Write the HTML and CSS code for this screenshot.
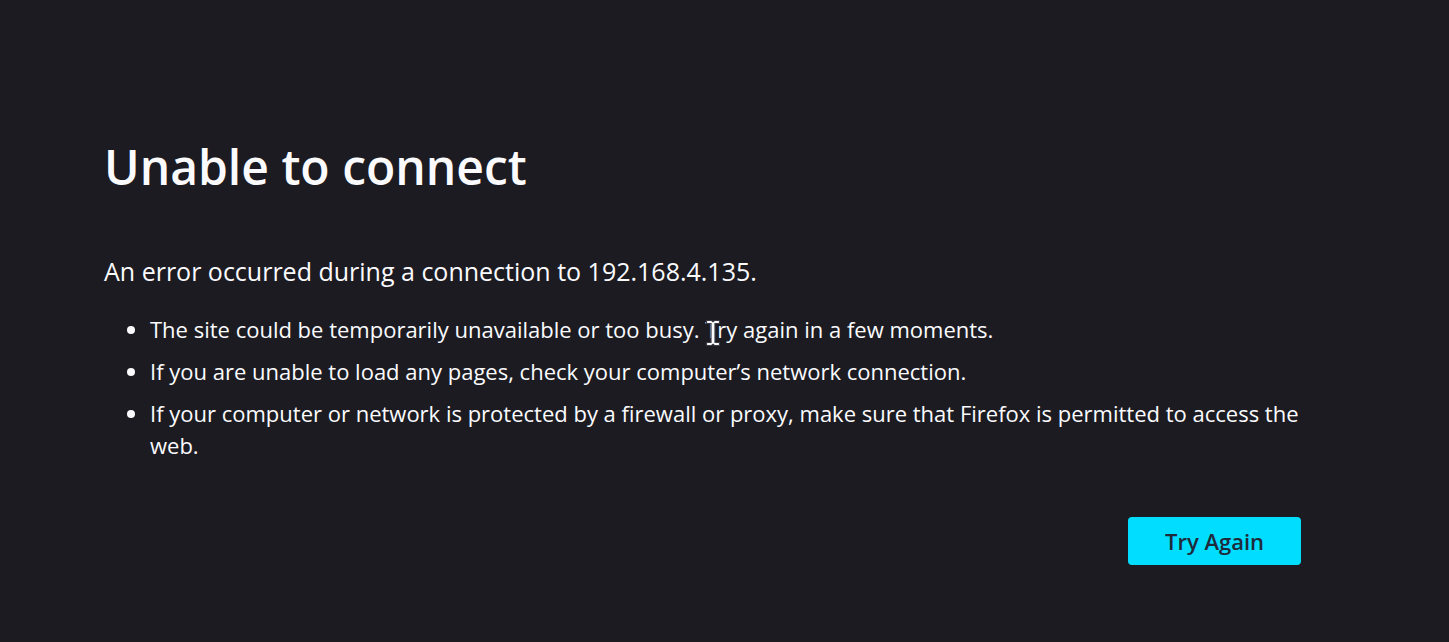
FILE: index.html
```html
<!DOCTYPE html>
<html lang="en">
<head>
<meta charset="utf-8">
<title>Problem loading page</title>
<link rel="stylesheet" href="styles.css">
</head>
<body>
<main class="container">
  <h1 class="title">Unable to connect</h1>
  <p class="desc">An error occurred during a connection to 192.168.4.135.</p>
  <ul class="tips">
    <li>The site could be temporarily unavailable or too busy. Try again in a few moments.</li>
    <li>If you are unable to load any pages, check your computer’s network connection.</li>
    <li>If your computer or network is protected by a firewall or proxy, make sure that Firefox is permitted to access the web.</li>
  </ul>
  <div class="actions">
    <button class="primary" type="button">Try Again</button>
  </div>
</main>
<svg class="cursor" width="16" height="28" viewBox="0 0 16 28" aria-hidden="true">
  <path d="M1.5 1.5h5l1.5 1.2 1.5-1.2h5v3h-4.5v19h4.5v3h-5L8 25.3l-1.5 1.2h-5v-3H6v-19H1.5z" fill="#fbfbfe" stroke="#3a3944" stroke-width="1.2"/>
</svg>
</body>
</html>
```

FILE: styles.css
```css
html, body {
  margin: 0;
  padding: 0;
  background: #1c1b22;
  color: #fbfbfe;
  font-family: "Open Sans", "Noto Sans", "DejaVu Sans", sans-serif;
}

.container {
  width: 1197px;
  margin-left: 104px;
  padding-top: 134px;
}

.title {
  margin: 0;
  font-size: 48px;
  font-weight: 600;
  line-height: 66px;
}

.desc {
  margin: 55px 0 0;
  font-size: 25px;
  line-height: 32px;
}

.tips {
  margin: 26px 0 0;
  padding-left: 46px;
  font-size: 22px;
  line-height: 32px;
}

.tips li {
  margin-bottom: 10px;
}

.actions {
  display: flex;
  justify-content: flex-end;
  margin-top: 56px;
}

.primary {
  width: 173px;
  height: 48px;
  border: none;
  border-radius: 4px;
  background: #00ddff;
  color: #1f2a3a;
  font-family: inherit;
  font-size: 22px;
  font-weight: 600;
  padding: 0;
}

.cursor {
  position: absolute;
  left: 705px;
  top: 319px;
}
```
